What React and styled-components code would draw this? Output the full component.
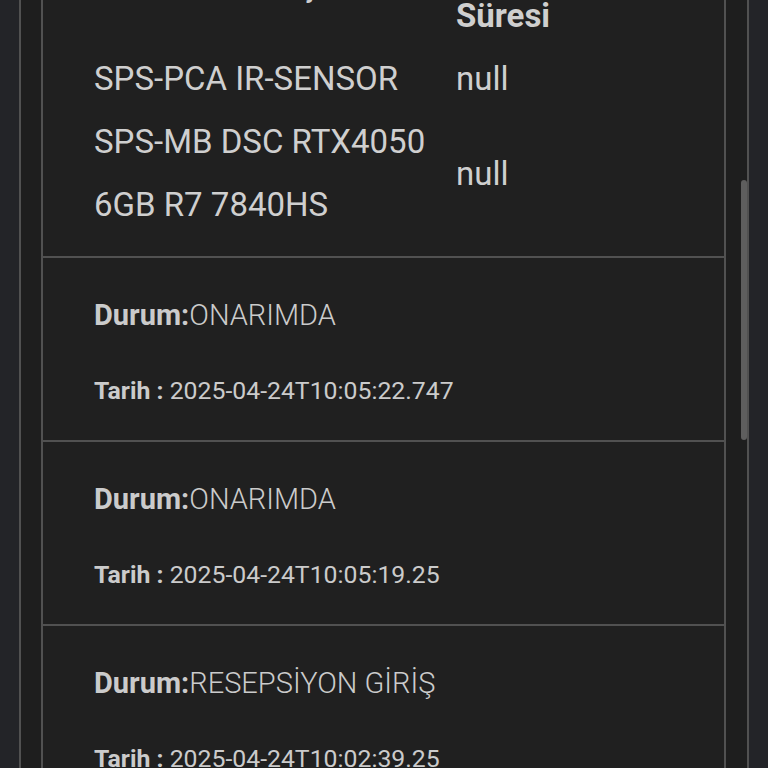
import React from "react";
import styled, { createGlobalStyle } from "styled-components";

const Global = createGlobalStyle`
  html, body { margin: 0; padding: 0; background: #232428; height: 100%; overflow: hidden; }
  body { font-family: Roboto, "Noto Sans", "Liberation Sans", sans-serif; }
`;

const Frame = styled.div`
  position: relative;
  box-sizing: border-box;
  margin-left: 19px;
  width: 730px;
  height: 768px;
  overflow: hidden;
  background: #1e1e1e;
  border-left: 2px solid #515151;
  border-right: 2px solid #515151;
  padding: 0 21px 0 20px;
`;

const Card = styled.div`
  margin-top: -102px;
  border-left: 2px solid #515151;
  border-right: 2px solid #515151;
  border-top: 2px solid #515151;
  background: #202020;
`;

const Item = styled.div`
  border-bottom: 2px solid #515151;
  padding: ${(p) => p.$pad || "40px 20px 35px 51px"};
`;

const Table = styled.div`
  display: grid;
  grid-template-columns: 362px 1fr;
  align-items: center;
  color: #cfcfcf;
  font-size: 33px;
  line-height: 63px;
`;

const Th = styled.div`
  font-weight: 700;
`;

const Td = styled.div`
  font-weight: 400;
`;

const Line = styled.p`
  margin: 0;
  color: #cbcbcb;
  font-size: ${(p) => p.$size}px;
  margin-top: ${(p) => p.$mt || 0}px;
`;

const Label = styled.span`
  font-weight: 700;
`;

const Value = styled.span`
  font-weight: ${(p) => (p.$light ? 300 : 400)};
`;

const Thumb = styled.div`
  position: absolute;
  left: 720px;
  top: 180px;
  width: 6px;
  height: 260px;
  border-radius: 3px;
  background: #5e5e5e;
`;

const history = [
  { status: "ONARIMDA", date: "2025-04-24T10:05:22.747" },
  { status: "ONARIMDA", date: "2025-04-24T10:05:19.25" },
  { status: "RESEPSİYON GİRİŞ", date: "2025-04-24T10:02:39.25" },
];

export default function App() {
  return (
    <>
      <Global />
      <Frame>
        <Card>
          <Item $pad="21px 20px 20px 51px">
            <Table>
              <Th>Kullanılan Parça</Th>
              <Th>
                Onarım
                <br />
                Süresi
              </Th>
              <Td>SPS-PCA IR-SENSOR</Td>
              <Td>null</Td>
              <Td>SPS-MB DSC RTX4050 6GB R7 7840HS</Td>
              <Td>null</Td>
            </Table>
          </Item>
          {history.map((h, i) => (
            <Item key={i}>
              <Line $size={29}>
                <Label>Durum:</Label>
                <Value $light>{h.status}</Value>
              </Line>
              <Line $size={24.8} $mt={44}>
                <Label>Tarih :</Label> <Value>{h.date}</Value>
              </Line>
            </Item>
          ))}
        </Card>
        <Thumb />
      </Frame>
    </>
  );
}
